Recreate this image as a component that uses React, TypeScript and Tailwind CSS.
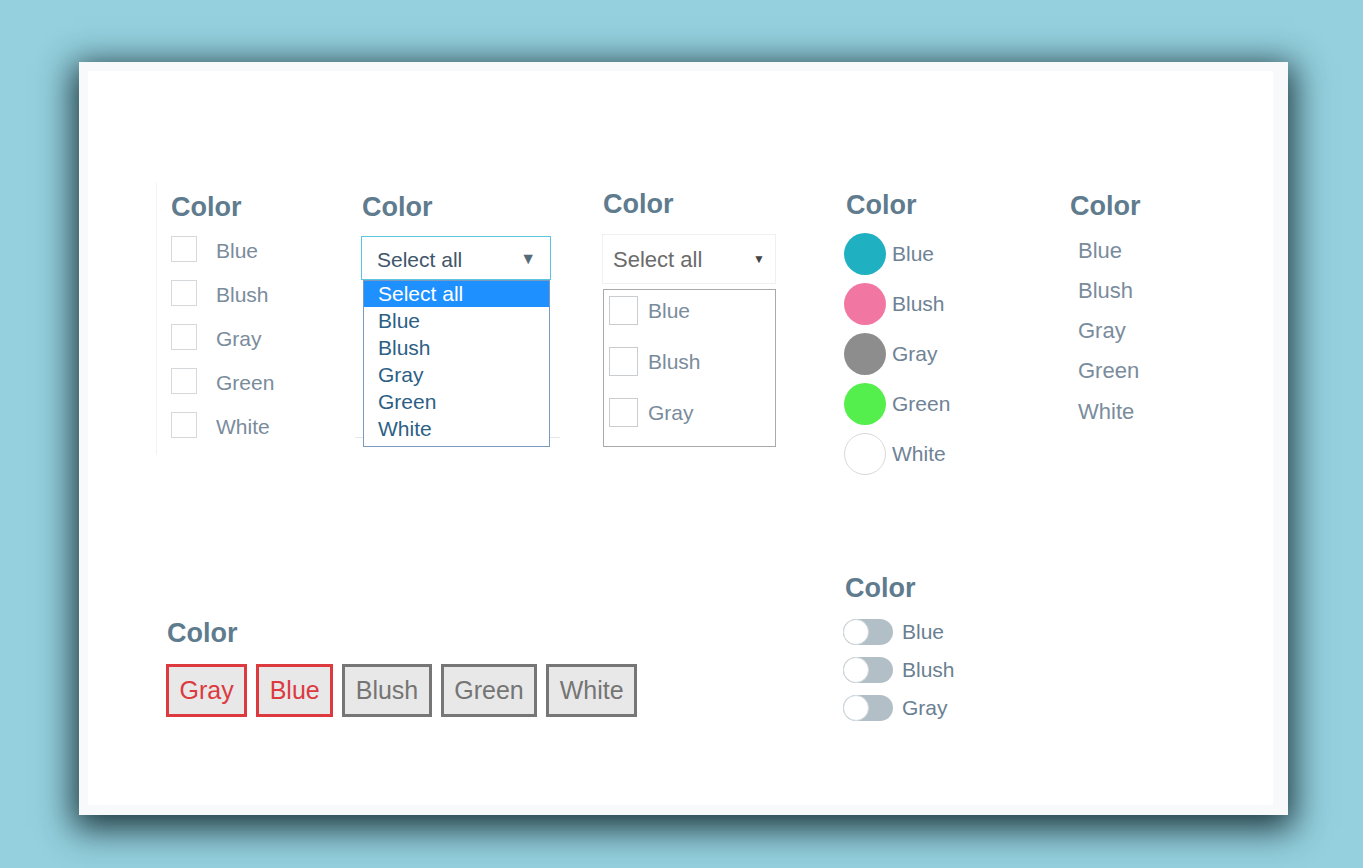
import React from "react";

const F = { fontFamily: '"Liberation Sans", Arial, sans-serif' };
const colors = ["Blue", "Blush", "Gray", "Green", "White"];

function Heading({ className = "" }: { className?: string }) {
  return (
    <div className={`text-[27px] leading-[30px] font-bold text-[#5f7b8e] ${className}`}>Color</div>
  );
}

export default function App() {
  return (
    <div className="w-full h-[868px] bg-[#94d0de] pt-[62px] pl-[79px] overflow-hidden" style={F}>
      <div className="w-[1209px] h-[753px] bg-[#f7f9fb] pt-[9px] pl-[9px] pr-[15px] pb-[10px] shadow-[0_8px_32px_6px_rgba(18,40,46,0.9)]">
        <div className="w-full h-full bg-white flex flex-col">
          {/* top row */}
          <div className="flex items-start mt-[112px] ml-[68px]">
            {/* col1 */}
            <div className="w-[205px] border-l border-[#f1f3f4] pt-[9px] pl-[14px] pb-[8px]">
              <Heading />
              <div className="mt-[5px] flex flex-col">
                {colors.map((c) => (
                  <div key={c} className="h-[44px] flex items-center">
                    <div className="w-[26px] h-[26px] border border-[#d6d9dc] bg-white" />
                    <span className="ml-[19px] text-[21px] text-[#7a8c9c] pt-[3px]">{c}</span>
                  </div>
                ))}
              </div>
            </div>
            {/* col2 */}
            <div className="w-[241px] pt-[9px]">
              <Heading className="pl-px" />
              <div className="relative mt-[14px] w-[190px]">
                <div className="h-[44px] border border-[#5bc4e0] flex items-center justify-between pl-[15px] pr-[14px]">
                  <span className="text-[21px] text-[#41566a] pt-[3px]">Select all</span>
                  <span className="text-[16px] text-[#566b78] pt-[2px]">▼</span>
                </div>
                <div className="h-[158px] w-[205px] -ml-[6px] border-b border-[#e4e7ea]" />
                <div className="absolute left-[2px] top-[44px] w-[187px] h-[167px] border border-[#7b98bf] bg-white flex flex-col">
                  <div className="h-[26px] bg-[#1e90ff] text-white text-[21px] leading-[26px] pl-[14px]">Select all</div>
                  {colors.map((c) => (
                    <div key={c} className="h-[27px] text-[21px] leading-[27px] text-[#2d5f86] pl-[14px]">{c}</div>
                  ))}
                </div>
              </div>
            </div>
            {/* col3 */}
            <div className="w-[242px] pt-[6px]">
              <Heading className="pl-px" />
              <div className="mt-[15px] w-[174px] h-[50px] border border-[#eef0f1] flex items-center justify-between pl-[10px] pr-[10px]">
                <span className="text-[22px] text-[#6b6b6b]">Select all</span>
                <span className="text-[12px] text-[#444]">▼</span>
              </div>
              <div className="mt-[5px] ml-px w-[173px] h-[158px] border border-[#aaaaaa] pt-[6px] pl-[5px] flex flex-col gap-[22px]">
                {colors.slice(0, 3).map((c) => (
                  <div key={c} className="h-[29px] flex items-center">
                    <div className="w-[29px] h-[29px] border border-[#c9cdd0] bg-white" />
                    <span className="ml-[10px] text-[21px] text-[#7a8c9c]">{c}</span>
                  </div>
                ))}
              </div>
            </div>
            {/* col4 */}
            <div className="w-[226px] pt-[7px]">
              <Heading className="pl-[2px]" />
              <div className="mt-[13px] flex flex-col gap-[8px]">
                {[
                  ["Blue", "bg-[#1fb0c1]"],
                  ["Blush", "bg-[#f176a1]"],
                  ["Gray", "bg-[#8d8d8d]"],
                  ["Green", "bg-[#55ef4d]"],
                  ["White", "bg-white border border-[#d9d9d9]"],
                ].map(([c, cls]) => (
                  <div key={c} className="h-[42px] flex items-center">
                    <div className={`w-[42px] h-[42px] rounded-full ${cls}`} />
                    <span className="ml-[6px] text-[21px] text-[#6f8396]">{c}</span>
                  </div>
                ))}
              </div>
            </div>
            {/* col5 */}
            <div className="pt-[8px]">
              <Heading />
              <div className="mt-[9px] flex flex-col pl-[8px]">
                {colors.map((c) => (
                  <div key={c} className="h-[40.25px] flex items-center text-[22px] text-[#7a8c9c]">{c}</div>
                ))}
              </div>
            </div>
          </div>
          {/* bottom row */}
          <div className="flex items-start mt-[98px] ml-[78px]">
            <div className="w-[677px] pt-[45px]">
              <Heading className="pl-px" />
              <div className="mt-[16px] flex gap-[9px]">
                {["Gray", "Blue", "Blush", "Green", "White"].map((c, i) => (
                  <div
                    key={c}
                    className={`h-[53px] px-[10.5px] flex items-center bg-[#e8e8e8] border-[3px] text-[25px] ${
                      i < 2 ? "border-[#dc3a3f] text-[#dc3a3f]" : "border-[#767676] text-[#757575]"
                    }`}
                  >
                    {c}
                  </div>
                ))}
              </div>
            </div>
            <div>
              <Heading className="pl-[2px]" />
              <div className="mt-[16px] flex flex-col gap-[12px]">
                {colors.slice(0, 3).map((c) => (
                  <div key={c} className="h-[26px] flex items-center">
                    <div className="w-[50px] h-[26px] rounded-full bg-[#b2bfc7] flex items-center">
                      <div className="w-[26px] h-[26px] rounded-full bg-white border border-[#d3d9dd]" />
                    </div>
                    <span className="ml-[9px] text-[21px] text-[#6a7f91]">{c}</span>
                  </div>
                ))}
              </div>
            </div>
          </div>
        </div>
      </div>
    </div>
  );
}
